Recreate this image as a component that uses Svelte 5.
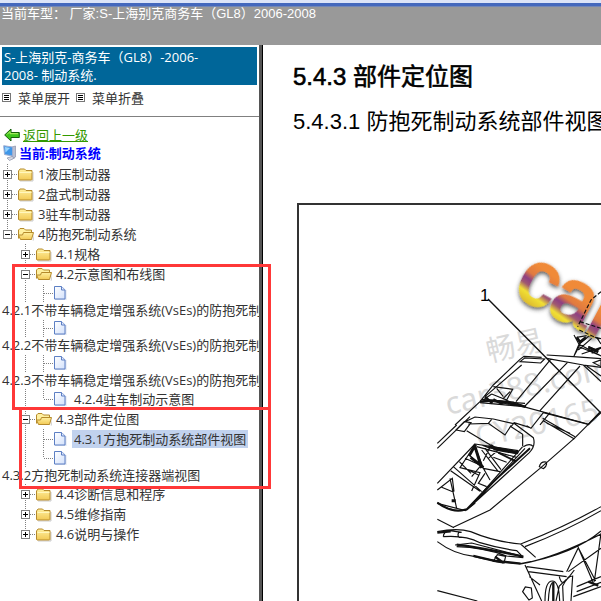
<script>
  const wiring = '不带车辆稳定增强系统(VsEs)的防抱死制';

  let tree = $state([
    { label: '1液压制动器', open: false, children: [] },
    { label: '2盘式制动器', open: false, children: [] },
    { label: '3驻车制动器', open: false, children: [] },
    {
      label: '4防抱死制动系统',
      open: true,
      children: [
        { label: '4.1规格', open: false, children: [] },
        {
          label: '4.2示意图和布线图',
          open: true,
          children: [
            { label: '4.2.1' + wiring, long: true },
            { label: '4.2.2' + wiring, long: true },
            { label: '4.2.3' + wiring, long: true },
            { label: '4.2.4驻车制动示意图' }
          ]
        },
        {
          label: '4.3部件定位图',
          open: true,
          children: [
            { label: '4.3.1方抱死制动系统部件视图', selected: true },
            { label: '4.3.2方抱死制动系统连接器端视图', long: true }
          ]
        },
        { label: '4.4诊断信息和程序', open: false, children: [] },
        { label: '4.5维修指南', open: false, children: [] },
        { label: '4.6说明与操作', open: false, children: [] }
      ]
    }
  ]);

  function setAll(nodes, open) {
    for (const node of nodes) {
      if (node.children) {
        node.open = open;
        setAll(node.children, open);
      }
    }
  }
</script>

{#snippet menuIcon()}
  <svg class="menu-icon" width="10" height="10" viewBox="0 0 10 10" shape-rendering="crispEdges">
    <rect x=".5" y=".5" width="8" height="8" fill="#fff" stroke="#777" />
    <path d="M2 2.5h5M2 4.5h5M2 6.5h5" stroke="#000" />
  </svg>
{/snippet}

{#snippet guide(kind)}
  <svg class="guide" width="18" height="20" viewBox="0 0 18 20" shape-rendering="crispEdges">
    {#if kind !== 'blank'}
      <path d={kind === 'end' ? 'M7.5 0V10' : 'M7.5 0V20'} stroke="#808080" stroke-dasharray="1 1" />
    {/if}
    {#if kind === 'end' || kind === 'tee'}
      <path d="M8 10.5H18" stroke="#808080" stroke-dasharray="1 1" />
    {/if}
  </svg>
{/snippet}

{#snippet nodeIcon(node)}
  <svg class="node-icon" width="18" height="18" viewBox="0 0 18 18">
    {#if !node.children}
      <path d="M1 3h8l3.500 3.500V16H1z" fill="#8fa5cd" opacity=".35" />
      <path d="M.5 2.500h7l3.500 3.500v9H.5z" fill="url(#page)" stroke="#5c7fc4" />
      <path d="M7.500 2.500V6H11" fill="#dfe8fb" stroke="#5c7fc4" />
    {:else if node.open}
      <path d="M2 15.500h12.500L16 9v6.500z" fill="#aaa" opacity=".5" />
      <path d="M.5 13.500V5l1.500-1.500h4L7.500 5h6v3" fill="#fff0a0" stroke="#b58a2c" />
      <path d="M2.500 14.500.5 10h4l1-2.500h10l-2 7z" fill="url(#folder)" stroke="#b58a2c" stroke-linejoin="round" />
    {:else}
      <path d="M2 16h13V7" fill="none" stroke="#aaa" opacity=".6" />
      <path d="M.5 14.500V6L2 4h4.500L8 5.500h6v9l-.5.500H1z" fill="url(#folder)" stroke="#b58a2c" stroke-linejoin="round" />
      <path d="M1.500 7.500h12" stroke="#fff6bd" />
    {/if}
  </svg>
{/snippet}

{#snippet branch(nodes, guides)}
  <ul>
    {#each nodes as node, i}
      {@const last = i === nodes.length - 1}
      <li>
        <div class="row" class:long={node.long}>
          {#each guides as kind}{@render guide(kind)}{/each}
          {#if node.children}
            <button class="toggle" aria-label={node.label} aria-expanded={node.open} onclick={() => (node.open = !node.open)}>
              {@render guide(last ? 'end' : 'tee')}
              <svg class="box" width="9" height="9" viewBox="0 0 9 9" shape-rendering="crispEdges">
                <rect x=".5" y=".5" width="8" height="8" fill="#fff" stroke="#808080" />
                <path d={node.open ? 'M2 4.500h5' : 'M2 4.500h5M4.500 2v5'} stroke="#000" />
              </svg>
            </button>
          {:else}
            {@render guide(last ? 'end' : 'tee')}
          {/if}
          {@render nodeIcon(node)}
          {#if !node.long}
            <a class="label" class:selected={node.selected} href="#view">{node.label}</a>
          {/if}
        </div>
        {#if node.long}
          <a class="label below" href="#view">{node.label}</a>
        {/if}
        {#if node.children && node.open}
          {@render branch(node.children, [...guides, last ? 'blank' : 'line'])}
        {/if}
      </li>
    {/each}
  </ul>
{/snippet}

<div class="page">
  <svg class="defs" width="0" height="0">
    <defs>
      <linearGradient id="folder" x1="0" y1="0" x2="0" y2="1">
        <stop offset="0" stop-color="#fff0a0" />
        <stop offset="1" stop-color="#f2c955" />
      </linearGradient>
      <linearGradient id="page" x1="0" y1="0" x2="1" y2="1">
        <stop offset="0" stop-color="#fff" />
        <stop offset="1" stop-color="#d3e1fb" />
      </linearGradient>
    </defs>
  </svg>

  <header>当前车型： 厂家:S-上海别克商务车（GL8）2006-2008</header>

  <div class="body">
    <aside>
      <h1>S-上海别克-商务车（GL8）-2006-<br />2008- 制动系统.</h1>
      <div class="actions">
        <button onclick={() => setAll(tree, true)}>{@render menuIcon()}菜单展开</button>
        <button onclick={() => setAll(tree, false)}>{@render menuIcon()}菜单折叠</button>
      </div>
      <nav>
        <div class="back">
          <svg width="16" height="14" viewBox="0 0 16 14">
            <path d="M.7 7 7 1v3.500h8.300v5H7V13z" fill="#3fc51c" stroke="#14600a" stroke-linejoin="round" />
            <path d="M3 6.500 6 3.500v2.200h8" fill="none" stroke="#b5f06a" />
          </svg>
          <a href="#up">返回上一级</a>
        </div>
        <div class="current">
          <svg width="14" height="16" viewBox="0 0 14 16">
            <path d="M9 2l3.500-1v11L9 14z" fill="#b9bfd0" stroke="#8b91a8" stroke-width=".7" />
            <path d="M.7.700 9.500 2v9L1.500 9.500z" fill="#3f97e8" stroke="#9cabd0" />
            <path d="M2 2l5 1-4.500 4.500z" fill="#9bd5ff" />
            <path d="M4 13l5-1.500 2.500 1.500-5 2.500z" fill="#d5d9e4" stroke="#8b91a8" stroke-width=".7" />
          </svg>
          <strong>当前:制动系统</strong>
        </div>
        {@render branch(tree, [])}
      </nav>
    </aside>

    <main id="view">
      <h2>5.4.3 部件定位图</h2>
      <h3>5.4.3.1 防抱死制动系统部件视图</h3>
      <figure>
        <svg width="302" height="396" viewBox="299 205 302 396" role="img" aria-label="防抱死制动系统部件视图">
          <defs>
            <linearGradient id="logo" gradientUnits="userSpaceOnUse" x1="6" y1="-42" x2="0" y2="2">
              <stop offset=".1" stop-color="#f08a38" />
              <stop offset=".34" stop-color="#e07a40" />
              <stop offset=".48" stop-color="#8d3f83" />
              <stop offset=".6" stop-color="#a05a70" />
              <stop offset=".74" stop-color="#f1e035" />
              <stop offset="1" stop-color="#d8b22c" />
            </linearGradient>
            <filter id="shade" x="-20%" y="-20%" width="140%" height="140%">
              <feDropShadow dx="1" dy="2" stdDeviation="2" flood-color="#333" flood-opacity=".8" />
            </filter>
          </defs>

          <g class="mark">
            <text transform="translate(489 362) rotate(-13)">畅易</text>
            <text class="wide" transform="translate(448 415) rotate(-13)">car388.com</text>
            <text class="wide" transform="translate(478 448) rotate(-13)">CY20165</text>
          </g>

          <g class="lines" transform="translate(430 250) scale(.3333)">
            <path d="M75 525 150 455 190 405 270 328 282 319 335 322M270 335l62 4 12-12-60-3zM350 315 430 320 513 326M350 325 460 345 513 352M460 345l53 50M470 348l43 30M275 345 165 440M362 328 258 455M412 338 285 468M450 348 330 482M360 488l-30 37M190 410l58 8-18 32-45-18M185 432 160 450 285 470M150 458 280 470 473 522M155 448l95 8 38 14M200 415l20 25M240 425l-20 20" />
            <path d="M150 455l40-4 60 10 36 10M190 448l22 12 20-6 22 12M165 440l22 20" stroke-width="7" />
            <path d="M432 255l15 28-15 35M447 283l30-25 36 8M440 262l30-5M447 283l66 35M445 300l40-35M455 312l58-20M432 318l15-28 60 25M475 290l30 12M485 310l28-16M500 262l13 20M490 338l23-8v20z" />
            <path d="M475 292l30 14M440 262l10 14 18-14" stroke-width="8" />
          </g>

          <g class="lines" transform="translate(430 400) scale(.3333)">
            <path d="M22 130 80 75M22 145 120 50M22 250 135 132M78 90l25-25 20 3-20 27zM105 65l30-14 55 6 60 14M115 72l60-2 50 35 18-28M175 70l10-12M243 80l10-12 45 14M290 77l13 8 37-47 20 4M110 92l75 45M250 68l60 45q8 25-12 45L110 330q-45 8-88-22M240 78l38 25v35M280 140q20-12 30 0M278 140 115 325M285 145 130 312M340 38l135 35L430 118M338 55l97 55M340 62l92 54M350 70l70 30M475 73l38-35" />
            <path d="M135 132l130 20M140 140l120 32M155 135l20 8 10-8 20 14 60 8M135 140l25 65 20 35M180 142l-20 40M160 205l50 10M155 150l50 65M165 145l48 64M205 150l-30 25M190 172l40 15M115 162l32 32M105 175l45 20M88 185l35 35M70 200l85 75M62 212l88 62M115 165l-25 38 60 15-25 55M150 200l-25 30M165 220l-20 30 25 10M60 235l20 90M22 270l45-35 5 40M35 262l35 14M22 310l85 22M115 210l30 15" />
            <path d="M137 133l-20 35M135 140l20 64M122 172l38 30M175 140l90 18M65 302h12" stroke-width="9" />
            <path d="M22 308q45 34 88 20l25-20M190 148l70 12M205 158l50 25M300 145 190 245 110 328" stroke-width="6" />
            <path d="M22 358l50 25M70 382 180 330 330 205 432 116M328 200q4-16 20-14 6 10-8 20zM22 395q60-12 100 0 70 30 150 37 130-50 241-112M285 440q125-48 228-108M22 425q50 38 110 44 60 15 140 22 160-28 241-98M40 410q0-15 20-18l35 5M40 410q65-5 110 18 60 18 110 24l20 20M88 395q-8 10 0 18M75 435l50-6 150 40M80 440q80 2 150 28l50 5M190 484l12-20 25 5-5 20zM272 432l45 40M272 492q100-18 241-90M285 495l50 108M295 515l115 15M290 500l110 15M298 530l32 25M410 515l35-72 45 105M445 443l52 100M415 515l98-70M513 400l-20 145M345 603q0-60 22-60 20 0 22 60M355 603q2-45 12-55M378 603l10-45 30-28 15-20M388 530q8 35 28 0M400 603l-2-45q15-30 30-30l-5 75M440 560l73-30M440 575l73-28M430 590l83-30M278 575l8-14 18 3 3 30-10 6zM22 572l120 31" />
            <path d="M80 434q80 10 200 36M195 470l25 18M475 545l30 12M22 398l40-4M130 468l60 14 82 9M370 545v58" stroke-width="7" />
            <path d="M160 0 285 10M475 73 513 35" />
          </g>

          <g class="lines"><path class="leader" d="M488 299 600 412 588 425" /></g>
          <text class="callout" x="480" y="301">1</text>
          <text class="logo" transform="translate(512 293) rotate(28)" fill="url(#logo)" stroke="url(#logo)" filter="url(#shade)">car</text>
          <g class="lines" transform="translate(430 250) scale(.3333)">
            <path d="M450 215l63 20M448 240l65 30M513 125l-30 25-40 80" stroke-dasharray="12 6" />
          </g>
        </svg>
      </figure>
    </main>
  </div>

  <div class="note first"></div>
  <div class="note second"></div>
</div>

<style>
  :global(body) {
    background: #fff;
  }
  .page {
    position: relative;
    display: flex;
    flex-direction: column;
    height: 100vh;
    overflow: hidden;
    font: 13px/18px 'Open Sans', 'Noto Sans CJK SC', sans-serif;
    color: #333;
  }
  .defs {
    position: absolute;
  }
  header {
    flex: none;
    height: 39px;
    border-top: 3px solid #4468bd;
    background: #999;
    color: #fff;
    font: 13px/15px 'Liberation Sans', 'Noto Sans CJK SC', sans-serif;
    padding-left: 1px;
    box-shadow: inset 0 1px #7286b6;
    margin-top: 3px;
    white-space: nowrap;
  }
  .page::before {
    content: '';
    position: absolute;
    inset: 0 0 auto;
    height: 3px;
    background: #dce4f8;
  }
  .body {
    flex: 1;
    display: flex;
    min-height: 0;
  }
  aside {
    flex: none;
    width: 259px;
    overflow: hidden;
    border-right: 3px solid #555;
  }
  h1 {
    margin: 2px 2px 0;
    padding: 1px 2px;
    background: #069;
    color: #fff;
    font: inherit;
    white-space: nowrap;
  }
  button {
    border: 0;
    padding: 0;
    background: none;
    font: inherit;
    color: inherit;
  }
  .actions {
    display: flex;
    gap: 6px;
    padding: 4px 2px 9px;
    border-bottom: 1px solid #808080;
  }
  .actions button {
    display: flex;
    align-items: center;
    gap: 6px;
  }
  nav {
    padding-top: 9px;
  }
  .back,
  .current {
    display: flex;
    align-items: center;
    height: 18px;
    gap: 3px;
    padding-left: 4px;
  }
  .current {
    gap: 2px;
    padding-left: 3px;
    margin-bottom: 2px;
  }
  .back a {
    color: #390;
  }
  strong {
    color: #00f;
  }
  ul {
    list-style: none;
    margin: 0;
    padding: 0;
  }
  .row {
    display: flex;
    align-items: center;
    height: 20px;
    overflow: hidden;
  }
  .row.long {
    height: 18px;
  }
  .guide,
  .node-icon,
  .menu-icon {
    display: block;
    flex: none;
  }
  .toggle {
    position: relative;
    flex: none;
  }
  .box {
    position: absolute;
    left: 3px;
    top: 6px;
  }
  .label {
    color: inherit;
    text-decoration: none;
    white-space: nowrap;
    padding: 0 2px;
  }
  .below {
    display: block;
    line-height: 17px;
  }
  .selected {
    background: #c1d2ee;
  }
  main {
    flex: 1;
    min-width: 0;
    overflow: hidden;
    border-left: 1px solid #000;
    padding: 16px 0 0 30px;
    color: #000;
    font-family: 'Liberation Sans', 'Noto Sans CJK SC', sans-serif;
    white-space: nowrap;
  }
  h2 {
    margin: 0;
    font-size: 24px;
    line-height: 32px;
    font-weight: 400;
    -webkit-text-stroke: 0.6px #000;
  }
  h3 {
    margin: 13px 0 0;
    font-size: 22px;
    line-height: 32px;
    font-weight: 400;
  }
  figure {
    margin: 65px 0 0 4px;
    border: 2px solid #333;
    border-width: 2px 0 0 2px;
  }
  figure svg {
    display: block;
  }
  .lines {
    fill: none;
    stroke: #111;
    stroke-width: 3.5;
  }
  .leader {
    stroke-width: 1.4;
  }
  .mark {
    fill: #dadada;
    font: 29px 'Noto Sans', 'Noto Sans CJK SC', sans-serif;
  }
  .wide {
    font-size: 31px;
  }
  .callout {
    font: 17px 'Liberation Sans', sans-serif;
  }
  .logo {
    font: 76px 'Liberation Sans', sans-serif;
    stroke-width: 3;
  }
  .note {
    position: absolute;
    box-sizing: border-box;
    border: 3px solid #ff3838;
    pointer-events: none;
  }
  .first {
    left: 12px;
    top: 264px;
    width: 259px;
    height: 146px;
  }
  .second {
    left: 19px;
    top: 407px;
    width: 252px;
    height: 82px;
  }
</style>
